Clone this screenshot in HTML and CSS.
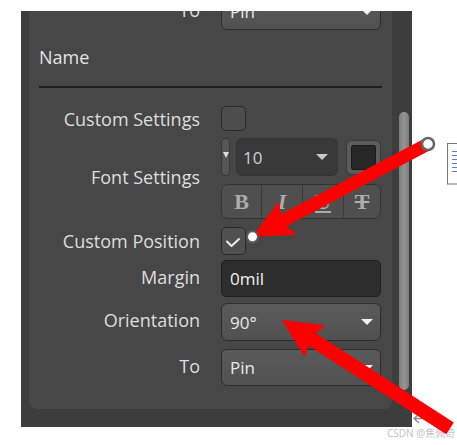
FILE: index.html
```html
<!DOCTYPE html>
<html>
<head>
<meta charset="utf-8">
<link rel="stylesheet" href="styles.css">
</head>
<body>
<div class="page">
  <div class="frame">
    <div class="inner">
      <div class="content">
        <div class="row r-top">
          <div class="lbl up">To</div>
          <div class="select"><span>Pin</span><i class="caret"></i></div>
        </div>
        <div class="header">Name</div>
        <div class="divider"></div>
        <div class="row r-cs">
          <div class="lbl">Custom Settings</div>
          <div class="check"></div>
        </div>
        <div class="row r-fs">
          <div class="lbl up">Font Settings</div>
          <div class="fontctl">
            <div class="fontrow">
              <div class="spin"><i class="mini"></i></div>
              <div class="size"><span>10</span><i class="caret dim"></i></div>
              <div class="swatch"><div class="swatch-in"></div></div>
            </div>
            <div class="styles">
              <div class="sb b">B</div>
              <div class="sb it">I</div>
              <div class="sb u">U</div>
              <div class="sb s">T</div>
            </div>
          </div>
        </div>
        <div class="row r-cp">
          <div class="lbl">Custom Position</div>
          <div class="check on">
            <svg width="25" height="26" viewBox="0 0 25 26"><polyline points="6,13.5 10.5,18 18,11" fill="none" stroke="#ececec" stroke-width="2" stroke-linecap="round" stroke-linejoin="round"/></svg>
          </div>
        </div>
        <div class="row r-mg">
          <div class="lbl up">Margin</div>
          <div class="input"><span>0mil</span></div>
        </div>
        <div class="row r-or">
          <div class="lbl up">Orientation</div>
          <div class="select"><span>90°</span><i class="caret"></i></div>
        </div>
        <div class="row r-to">
          <div class="lbl up">To</div>
          <div class="select"><span>Pin</span><i class="caret"></i></div>
        </div>
      </div>
    </div>
    <div class="track"><div class="thumb"></div></div>
  </div>
  <div class="side">
    <svg width="14" height="42" viewBox="0 0 14 42">
      <rect x="0.5" y="0.5" width="20" height="40.5" fill="none" stroke="#777" stroke-width="1"/>
      <g stroke="#5b80c2" stroke-width="1">
        <line x1="5" y1="8.5" x2="14" y2="8.5"/>
        <line x1="5" y1="12.5" x2="14" y2="12.5"/>
        <line x1="5" y1="16.5" x2="14" y2="16.5"/>
        <line x1="5" y1="20.5" x2="14" y2="20.5"/>
        <line x1="5" y1="24.5" x2="14" y2="24.5"/>
        <line x1="5" y1="28.5" x2="14" y2="28.5"/>
      </g>
    </svg>
  </div>
  <div class="watermark">CSDN @焦佩奇</div>
  <svg class="annot" width="457" height="445" viewBox="0 0 457 445">
    <path d="M425 418.5 H414.5 M419 414 L414 418.5 L419 423" fill="none" stroke="#8a8a8a" stroke-width="1.3"/>
    <polygon fill="#ff0000" points="252,237 279.1,201.2 280.8,214.5 425,138.3 431,149.7 286.8,226 296.9,234.8"/>
    <circle cx="428" cy="144" r="6" fill="#ffffff" stroke="#666666" stroke-width="2.5"/>
    <circle cx="252.5" cy="236.8" r="5.5" fill="#ffffff" stroke="#5c5c5c" stroke-width="2"/>
    <polygon fill="#ff0000" points="282,320 325.3,325.3 316,333.6 453.8,422.5 446.2,434.3 308.4,345.4 304.7,357.3"/>
  </svg>
</div>
</body>
</html>
```

FILE: styles.css
```css
html, body {
  margin: 0;
  padding: 0;
  background: #ffffff;
  overflow: hidden;
}
.page {
  position: relative;
  width: 457px;
  height: 445px;
  display: flex;
  align-items: flex-start;
  padding: 11px 0 0 21px;
  box-sizing: border-box;
  font-family: "Open Sans", "Noto Sans", sans-serif;
}
.frame {
  width: 391px;
  height: 416px;
  background: #3d3d3d;
  display: flex;
  align-items: flex-start;
  padding-left: 8px;
  box-sizing: border-box;
  flex: none;
}
.inner {
  width: 363px;
  height: 398px;
  background: #474747;
  border-radius: 0 0 8px 8px;
  overflow: hidden;
  flex: none;
}
.content {
  display: flex;
  flex-direction: column;
  margin-top: -18px;
}
.row {
  display: grid;
  grid-template-columns: 171px 160px;
  column-gap: 21px;
  align-items: center;
}
.lbl {
  font-size: 18px;
  line-height: 24px;
  color: #dedede;
  text-align: right;
  white-space: nowrap;
}
.lbl.up { margin-bottom: 4px; }
.header {
  margin: 15px 0 0 10px;
  font-size: 18px;
  line-height: 24px;
  color: #e4e4e4;
}
.divider {
  margin: 17px 10px 0 10px;
  height: 2px;
  background: #1f1f1f;
}
.r-top { height: 37px; }
.r-cs { margin-top: 18px; height: 25px; }
.r-fs { margin-top: 7px; height: 81px; }
.r-cp { margin-top: 8px; height: 26px; }
.r-mg { margin-top: 7px; height: 37px; }
.r-or { margin-top: 6px; height: 38px; }
.r-to { margin-top: 8px; height: 37px; }

.select {
  height: 100%;
  box-sizing: border-box;
  border: 1px solid #2d2d2d;
  border-radius: 6px;
  background: linear-gradient(#5a5a5a, #515151);
  display: flex;
  align-items: center;
  justify-content: space-between;
  padding: 0 7px 0 8px;
  font-size: 17px;
  color: #e8e8e8;
}
.caret {
  width: 0;
  height: 0;
  border-left: 6.5px solid transparent;
  border-right: 6.5px solid transparent;
  border-top: 6px solid #f2f2f2;
}
.caret.dim { border-top-color: #c8c8c8; }

.check {
  width: 25px;
  height: 100%;
  box-sizing: border-box;
  border: 1.5px solid #2a2a2a;
  border-radius: 5px;
  background: #4d4d4d;
  display: flex;
  align-items: center;
  justify-content: center;
}
.check.on { background: #505050; }
.check svg { display: block; flex: none; }

.fontctl {
  display: flex;
  flex-direction: column;
  gap: 8px;
}
.fontrow {
  height: 38px;
  display: flex;
  align-items: center;
}
.spin {
  width: 9px;
  height: 38px;
  box-sizing: border-box;
  background: #565656;
  border: 1px solid #393939;
  border-radius: 4px;
  display: flex;
  align-items: center;
  justify-content: center;
  flex: none;
}
.mini {
  width: 0;
  height: 0;
  border-left: 3.5px solid transparent;
  border-right: 3.5px solid transparent;
  border-top: 6px solid #dcdcdc;
  margin-bottom: 4px;
}
.size {
  margin-left: 6px;
  width: 102px;
  height: 38px;
  box-sizing: border-box;
  background: #393939;
  border: 1px solid #343434;
  border-radius: 6px;
  display: flex;
  align-items: center;
  justify-content: space-between;
  padding: 0 9px 0 6px;
  font-size: 17px;
  color: #cfcfcf;
  flex: none;
}
.swatch {
  margin-left: 8px;
  width: 35px;
  height: 35px;
  box-sizing: border-box;
  background: #5c5c5c;
  border: 1px solid #3a3a3a;
  border-radius: 6px;
  display: flex;
  align-items: center;
  justify-content: center;
  flex: none;
}
.swatch-in {
  width: 25px;
  height: 25px;
  box-sizing: border-box;
  background: #272727;
  border: 1px solid #1b1b1b;
  border-radius: 2px;
}
.styles {
  height: 35px;
  box-sizing: border-box;
  border: 1px solid #343434;
  border-radius: 7px;
  background: #4f4f4f;
  display: grid;
  grid-template-columns: 39px 41px 41px 1fr;
  overflow: hidden;
}
.sb {
  display: flex;
  align-items: center;
  justify-content: center;
  font-family: "Liberation Serif", "DejaVu Serif", serif;
  font-weight: bold;
  font-size: 22px;
  color: #acacac;
  border-left: 1px solid #3a3a3a;
}
.sb:first-child { border-left: none; }
.sb.it { font-style: italic; }
.sb.u { text-decoration: underline; }
.sb.s { text-decoration: line-through; }

.input {
  height: 100%;
  box-sizing: border-box;
  border: 1px solid #202020;
  border-radius: 5px;
  background: #2d2d2d;
  display: flex;
  align-items: center;
  padding-left: 8px;
  font-size: 17px;
  color: #f0f0f0;
}

.track {
  width: 20px;
  padding-top: 101px;
  padding-left: 7px;
  box-sizing: border-box;
  flex: none;
}
.thumb {
  width: 10px;
  height: 278px;
  border-radius: 5px;
  background: linear-gradient(90deg, #7e7e7e, #949494 50%, #7e7e7e);
}

.side {
  margin: 132px 0 0 35px;
  width: 10px;
  height: 42px;
  overflow: visible;
  flex: none;
}
.side svg { display: block; }

.watermark {
  position: absolute;
  left: 387px;
  top: 426px;
  font-family: "Noto Sans", "Noto Sans CJK SC", sans-serif;
  font-size: 10px;
  line-height: 14px;
  color: #c4c4c4;
  white-space: nowrap;
}
.annot {
  position: absolute;
  left: 0;
  top: 0;
  pointer-events: none;
}
```
